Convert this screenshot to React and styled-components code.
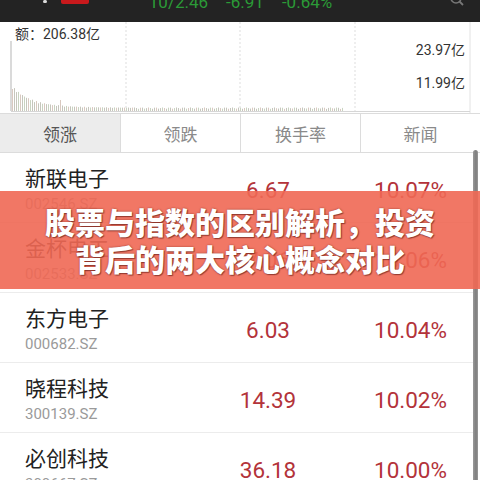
import React from "react";
import styled, { createGlobalStyle } from "styled-components";

const GlobalStyle = createGlobalStyle`
  html, body {
    margin: 0;
    padding: 0;
    background: #fff;
    overflow: hidden;
  }
  body {
    font-family: Roboto, "Noto Sans CJK SC", sans-serif;
  }
`;

const Screen = styled.div`
  position: relative;
  width: 480px;
  height: 480px;
  display: flex;
  flex-direction: column;
  overflow: hidden;
  background: #fff;
`;

const TopBar = styled.div`
  height: 22px;
  flex-shrink: 0;
  background: #232323;
  display: flex;
  align-items: flex-start;
  overflow: hidden;
`;

const Dot = styled.span`
  width: 4px;
  height: 3px;
  margin: 0 14px 0 43px;
  background: #ddd;
  border-radius: 2px;
`;

const RedTag = styled.span`
  width: 28px;
  height: 4px;
  background: #c8191c;
  border-radius: 0 0 2px 2px;
`;

const Quote = styled.div`
  flex: 1;
  display: flex;
  justify-content: center;
  gap: 18px;
  margin-top: -6px;
  padding-right: 56px;
  font-size: 17px;
  line-height: 17px;
  color: #2b9a37;
`;

const SearchIcon = styled.svg`
  margin: 0 12px 0 0;
  flex-shrink: 0;
`;

const Chart = styled.div`
  position: relative;
  height: 91px;
  flex-shrink: 0;
`;

const ChartLabel = styled.span`
  position: absolute;
  font-size: 14px;
  line-height: 16px;
  color: #333;
  ${(p) => (p.$right ? `right: 15px;` : `left: 15px;`)}
  top: ${(p) => p.$top}px;
`;

const Tabs = styled.div`
  display: grid;
  grid-template-columns: 120px 120px 120px 1fr;
  height: 40px;
  flex-shrink: 0;
  border-top: 1px solid #dcdcdc;
  border-bottom: 1px solid #dcdcdc;
  box-sizing: border-box;
`;

const Tab = styled.div`
  display: flex;
  align-items: center;
  justify-content: center;
  font-size: 17px;
  color: ${(p) => (p.$active ? "#555" : "#8a8a8a")};
  background: ${(p) => (p.$active ? "#ececec" : "#fff")};
  border-left: ${(p) => (p.$first ? "none" : "1px solid #dcdcdc")};
`;

const ListArea = styled.div`
  flex: 1;
  display: flex;
  min-height: 0;
`;

const List = styled.div`
  flex: 1;
  display: flex;
  flex-direction: column;
`;

const Row = styled.div`
  height: 70px;
  flex-shrink: 0;
  box-sizing: border-box;
  display: grid;
  grid-template-columns: 188px 110px 1fr;
  padding: 0 26px 0 25px;
  border-bottom: 1px solid #ececec;
`;

const NameBlock = styled.div`
  padding-top: 13px;
`;

const Name = styled.div`
  font-size: 21px;
  line-height: 26px;
  color: #222;
`;

const Code = styled.div`
  margin-top: 2px;
  font-size: 15px;
  line-height: 20px;
  color: #9a9a9a;
`;

const Num = styled.div`
  align-self: center;
  margin-top: 5px;
  font-size: 22.5px;
  color: #b3333a;
  text-align: ${(p) => p.$align};
`;

const Scrollbar = styled.div`
  width: 5px;
  margin: -3px 2px 0 0;
  background: linear-gradient(90deg, #9a9a9a, #7d7d7d 60%, #9a9a9a);
  border-radius: 3px 3px 0 0;
`;

const Banner = styled.div`
  position: absolute;
  left: 0;
  right: 0;
  top: 191px;
  height: 98px;
  background: rgba(240, 104, 84, 0.9);
  display: flex;
  flex-direction: column;
  align-items: center;
  justify-content: center;
`;

const BannerLine = styled.div`
  font-family: "Noto Sans CJK SC", sans-serif;
  font-weight: 900;
  font-size: 30px;
  line-height: 37px;
  color: #fff;
  text-shadow: 0 0 2px rgba(90, 20, 10, 0.6), 1px 1px 1px rgba(60, 0, 0, 0.45);
`;

const stocks = [
  { name: "新联电子", code: "002546.SZ", price: "6.67", pct: "10.07%" },
  { name: "金杯电工", code: "002533.SZ", price: "7.06", pct: "10.06%" },
  { name: "东方电子", code: "000682.SZ", price: "6.03", pct: "10.04%" },
  { name: "晓程科技", code: "300139.SZ", price: "14.39", pct: "10.02%" },
  { name: "必创科技", code: "300667.SZ", price: "36.18", pct: "10.00%" },
];

const tabs = ["领涨", "领跌", "换手率", "新闻"];

function VolumeBars() {
  const bars = [];
  for (let i = 0; i < 166; i++) {
    const x = 12 + i * 2;
    let h = 3 + 19 * Math.exp(-i / 9) + 3 * Math.abs(Math.sin(i * 1.7)) * Math.exp(-i / 30);
    if (i === 24) h = 11;
    if (i > 60) h = 2 + Math.abs(Math.sin(i * 0.9)) * 1.5;
    if (x > 343) h = i % 3 === 0 ? 1.5 : 1;
    const color = i % 4 === 0 ? "#d9c9c0" : i % 3 === 0 ? "#c9d3c0" : "#c6c6bc";
    bars.push(<rect key={i} x={x} y={89 - h} width="1" height={h} fill={color} />);
  }
  return bars;
}

export default function App() {
  return (
    <>
      <GlobalStyle />
      <Screen>
        <TopBar>
          <Dot />
          <RedTag />
          <Quote>
            <span>10/2.46</span>
            <span>-6.91</span>
            <span>-0.64%</span>
          </Quote>
          <SearchIcon width="20" height="8" viewBox="0 0 20 8">
            <circle cx="8" cy="-2" r="5" fill="none" stroke="#777" strokeWidth="1.6" />
            <line x1="11.5" y1="1.5" x2="15" y2="5" stroke="#777" strokeWidth="1.8" />
          </SearchIcon>
        </TopBar>

        <Chart>
          <svg width="480" height="91" viewBox="0 0 480 91">
            {[126, 240, 355].map((x) => (
              <line key={x} x1={x} y1="0" x2={x} y2="89" stroke="#ddd" strokeDasharray="2 2" />
            ))}
            <line x1="470" y1="0" x2="470" y2="91" stroke="#e2e2e2" />
            <line x1="11" y1="89.5" x2="470" y2="89.5" stroke="#d6d6d6" />
            <line x1="11" y1="19" x2="11" y2="89" stroke="#b5b5b5" />
            <VolumeBars />
          </svg>
          <ChartLabel $top={4}>额：206.38亿</ChartLabel>
          <ChartLabel $right $top={20}>23.97亿</ChartLabel>
          <ChartLabel $right $top={53}>11.99亿</ChartLabel>
        </Chart>

        <Tabs>
          {tabs.map((t, i) => (
            <Tab key={t} $active={i === 0} $first={i === 0}>
              {t}
            </Tab>
          ))}
        </Tabs>

        <ListArea>
          <List>
            {stocks.map((s) => (
              <Row key={s.code}>
                <NameBlock>
                  <Name>{s.name}</Name>
                  <Code>{s.code}</Code>
                </NameBlock>
                <Num $align="center">{s.price}</Num>
                <Num $align="right">{s.pct}</Num>
              </Row>
            ))}
          </List>
          <Scrollbar />
        </ListArea>

        <Banner>
          <BannerLine>股票与指数的区别解析，投资</BannerLine>
          <BannerLine>背后的两大核心概念对比</BannerLine>
        </Banner>
      </Screen>
    </>
  );
}
